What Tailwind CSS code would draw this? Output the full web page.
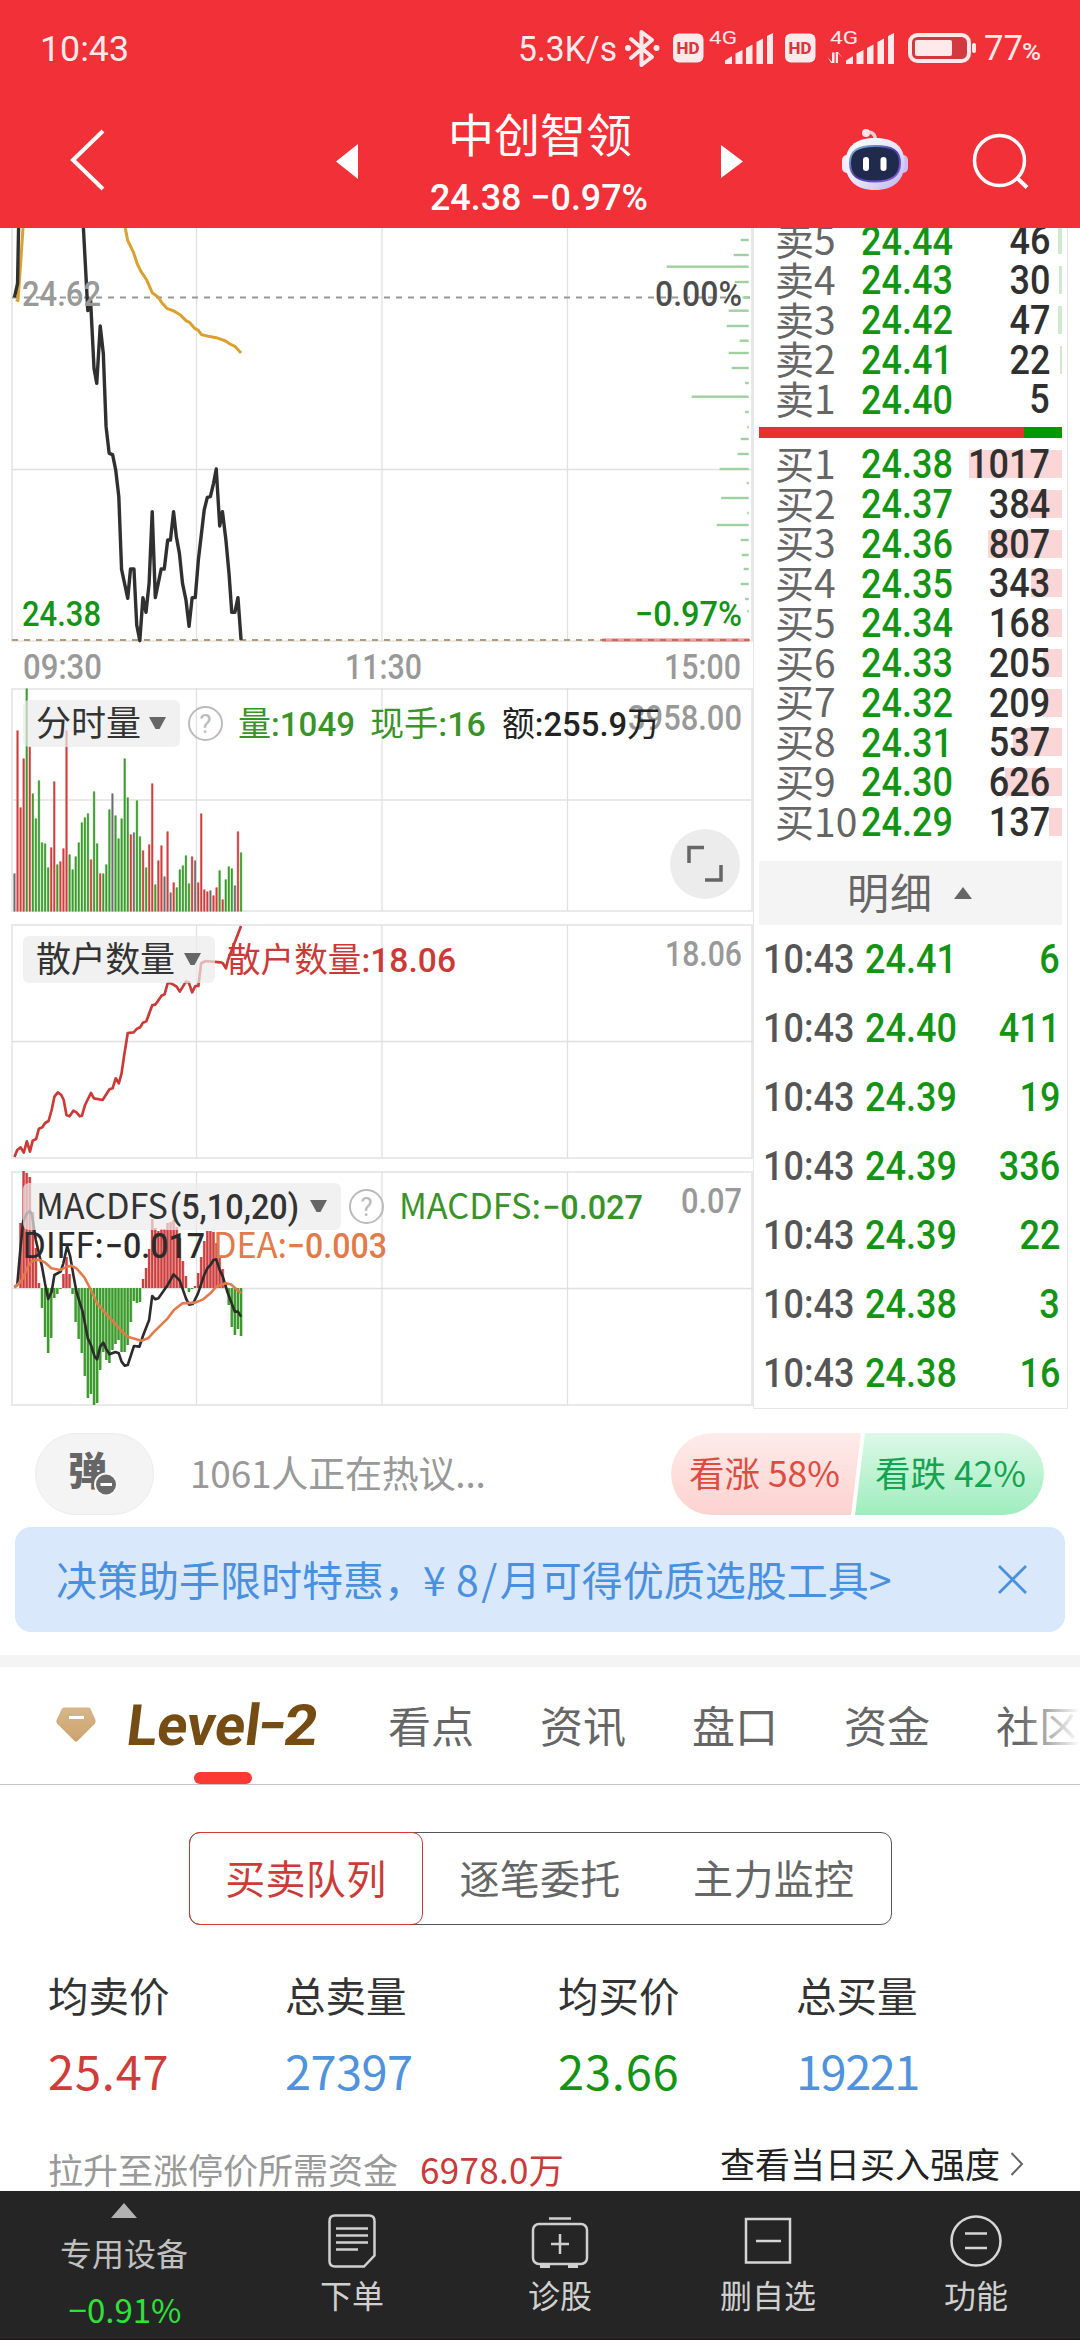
<!DOCTYPE html>
<html lang="zh-CN">
<head>
<meta charset="utf-8">
<title>中创智领</title>
<script src="https://cdn.jsdelivr.net/npm/@tailwindcss/browser@4"></script>
</head>
<body class="bg-white">
<div class="w-[1080px] h-[2340px] flex flex-col overflow-hidden bg-white font-['Noto_Sans_CJK_SC',sans-serif] text-[#333]">

  <!-- Status bar and title -->
  <header class="h-[228px] shrink-0 bg-[#f13038]">
    <svg width="1080" height="228" viewBox="0 0 1080 228" class="block font-['Roboto','Noto_Sans_CJK_SC',sans-serif]">
      <g fill="#ffe9ea">
        <text x="40" y="61" font-size="35" textLength="89" lengthAdjust="spacingAndGlyphs">10:43</text>
        <text x="518" y="61" font-size="35" textLength="99" lengthAdjust="spacingAndGlyphs">5.3K/s</text>
        <path d="M631 39 L652 57 L641.500 65 V32 L652 40 L631 58" fill="none" stroke="#ffe9ea" stroke-width="4" stroke-linejoin="round" stroke-linecap="round"/>
        <circle cx="628" cy="48" r="3"/><circle cx="656.500" cy="48" r="3"/>
        <rect x="673" y="33.500" width="30.500" height="29" rx="6"/>
        <rect x="785" y="33.500" width="30.500" height="29" rx="6"/>
        <g fill="#d8373d" font-size="17" font-weight="800" text-anchor="middle">
          <text x="688" y="54" textLength="23" lengthAdjust="spacingAndGlyphs">HD</text>
          <text x="800" y="54" textLength="23" lengthAdjust="spacingAndGlyphs">HD</text>
        </g>
        <text x="709" y="43.500" font-size="19" textLength="28" lengthAdjust="spacingAndGlyphs">4G</text>
        <text x="830" y="43.500" font-size="19" textLength="28" lengthAdjust="spacingAndGlyphs">4G</text>
        <path id="sig" d="M725 64V60.500L732 56V64ZM735.500 64V53.500L742.500 50V64ZM746 64V48L752.500 44.500V64ZM756.500 64V42L763 38.500V64ZM767 64V36L773 33V64Z"/>
        <use href="#sig" x="121"/>
        <path d="M827.500 57L832 62V52.500H834.500V63H831ZM843 58.500L838 53V63H835.800V52H838Z"/>
        <rect x="910" y="35" width="59" height="26" rx="7.500" fill="#d33a40" stroke="#ffe9ea" stroke-width="4"/>
        <rect x="915" y="40" width="37" height="16" rx="2"/>
        <rect x="972" y="43" width="4" height="10" rx="2"/>
        <text x="984" y="60" font-size="35" textLength="39" lengthAdjust="spacingAndGlyphs">77</text>
        <text x="1022" y="60" font-size="23" font-weight="500" textLength="19" lengthAdjust="spacingAndGlyphs">%</text>
      </g>
      <path d="M103 131L73 160L103 189" fill="none" stroke="#fff" stroke-width="4"/>
      <path d="M336 161.500L358 144V179ZM743 161.500L721 145V178Z" fill="#fff"/>
      <text x="448" y="152" font-size="46" fill="#fff" textLength="184" class="font-['Noto_Sans_CJK_SC']">中创智领</text>
      <text x="430" y="210" font-size="37" font-weight="500" fill="#fff" textLength="218" lengthAdjust="spacingAndGlyphs">24.38 −0.97%</text>
      <defs>
        <linearGradient id="helm" x1="0" y1="0" x2="1" y2="1"><stop offset="0" stop-color="#fff"/><stop offset=".55" stop-color="#e6e2fb"/><stop offset="1" stop-color="#b9b2ee"/></linearGradient>
        <linearGradient id="visor" x1="0" y1="0" x2="1" y2="1"><stop offset="0" stop-color="#7fc4e6"/><stop offset=".5" stop-color="#4b3fa8"/><stop offset="1" stop-color="#8a5be0"/></linearGradient>
      </defs>
      <path d="M865 133Q874 130 875.500 139" fill="none" stroke="#f3c9d8" stroke-width="3.500"/>
      <circle cx="866" cy="133" r="4" fill="#fde3ea"/>
      <rect x="842" y="155" width="10" height="18" rx="5" fill="#f3e9fb"/><rect x="898" y="155" width="10" height="18" rx="5" fill="#c9bff3"/>
      <path d="M875 138C896 138 904.500 148 904.500 163C904.500 180 894 190 875 190C856 190 845.500 180 845.500 163C845.500 148 854 138 875 138Z" fill="url(#helm)"/>
      <path d="M875 146C893 146 900 151 900 163C900 176 892 181.500 875 181.500C858 181.500 850 176 850 163C850 151 857 146 875 146Z" fill="#202a4d" stroke="url(#visor)" stroke-width="2"/>
      <rect x="863" y="157" width="6" height="14" rx="3" fill="#fff"/><rect x="880.500" y="157" width="6" height="14" rx="3" fill="#fff"/>
      <circle cx="999.500" cy="160.500" r="25" fill="none" stroke="#fff" stroke-width="3.500"/>
      <path d="M1017 178L1027 187.500" stroke="#fff" stroke-width="4"/>
    </svg>
  </header>

  <!-- Charts and order book -->
  <main class="flex h-[1181px] shrink-0">
    <section class="w-[753px] flex flex-col font-['Roboto','Noto_Sans_CJK_SC',sans-serif] font-medium">
      <svg id="price" width="753" height="453" viewBox="0 228 753 453" class="block">
        <path d="M12 228V641H753M752 228V641" fill="none" stroke="#e9e9e9" stroke-width="2"/>
        <path d="M196.500 228V641M382 228V641M567.500 228V641M12 469.500H753" fill="none" stroke="#e0e0e0" stroke-width="1.300"/>
        <path d="M12 297.500H753" stroke="#999" stroke-width="1.800" stroke-dasharray="6 6"/>
        <path d="M12 640H753" stroke="#b39a78" stroke-width="1.800" stroke-dasharray="6 6"/>
        <g id="dist"></g>
        <g transform="translate(0 220) scale(.34437 .33333)" fill="none" stroke-linejoin="round">
          <path vector-effect="non-scaling-stroke" stroke="#dba130" stroke-width="3" d="M47 238L52 242L60 130L67 20M363 20L371 62L388 98L398 130L408 152L426 180L442 218L458 230L470 248L486 266L505 273L525 286L540 302L550 307L565 325L575 330L585 344L605 349L628 353L655 363L668 372L682 379L700 399"/>
          <path vector-effect="non-scaling-stroke" stroke="#303030" stroke-width="3.400" d="M42 232L51 190L54 20M242 20L255 272L263 240L273 445L281 490L291 318L300 400L308 620L317 700L327 704L336 750L345 830L353 1048L371 1135L379 1047L389 1047L397 1215L406 1262L415 1133L424 1177L433 1090L442 875L451 1133L468 1047L477 1047L487 960L495 960L504 875L512 950L521 1000L530 1090L540 1140L549 1219L558 1133L567 1133L576 1020L593 870L602 832L611 830L620 790L628 747L638 918L646 875L656 960L665 1060L673 1177L682 1177L691 1133L700 1260"/>
        </g>
        <g font-size="35">
          <text x="22" y="306" fill="#999" textLength="79" lengthAdjust="spacingAndGlyphs">24.62</text>
          <text x="655" y="306" fill="#4d4d4d" textLength="87" lengthAdjust="spacingAndGlyphs">0.00%</text>
          <text x="22" y="626" fill="#149414" textLength="79" lengthAdjust="spacingAndGlyphs">24.38</text>
          <text x="635" y="626" fill="#149414" textLength="107" lengthAdjust="spacingAndGlyphs">−0.97%</text>
          <g fill="#999">
            <text x="23" y="679" textLength="79" lengthAdjust="spacingAndGlyphs">09:30</text>
            <text x="345" y="679" textLength="77" lengthAdjust="spacingAndGlyphs">11:30</text>
            <text x="664" y="679" textLength="77" lengthAdjust="spacingAndGlyphs">15:00</text>
          </g>
        </g>
      </svg>

      <svg width="753" height="237" viewBox="0 681 753 237" class="block">
        <path d="M12 688V911H753M12 689H753M752 688V911M12 800H753" fill="none" stroke="#e9e9e9" stroke-width="2"/>
        <path d="M196.500 688V911M382 688V911M567.500 688V911" stroke="#e0e0e0" stroke-width="1.300"/>
        <g id="volume"></g>
        <rect x="23" y="700" width="157" height="47" rx="6" fill="#ebebeb" fill-opacity=".7"/>
        <text x="36" y="736" font-size="35" font-weight="400" fill="#333" textLength="105">分时量</text>
        <path d="M149 717H166L159.500 729H155.500Z" fill="#666"/>
        <circle cx="205.500" cy="723.500" r="16.500" fill="none" stroke="#bbb" stroke-width="2"/>
        <text x="205.500" y="733" font-size="26" font-weight="400" fill="#bbb" text-anchor="middle">?</text>
        <text x="628" y="729.500" font-size="35" fill="#999" textLength="114" lengthAdjust="spacingAndGlyphs">3958.00</text>
        <g font-size="34">
          <text x="238" y="736" fill="#3a932a" textLength="117" lengthAdjust="spacingAndGlyphs"><tspan font-weight="400">量</tspan>:1049</text>
          <text x="370" y="736" fill="#3a932a" textLength="116" lengthAdjust="spacingAndGlyphs"><tspan font-weight="400">现手</tspan>:16</text>
          <text x="502" y="736" fill="#222" textLength="158" lengthAdjust="spacingAndGlyphs"><tspan font-weight="400">额</tspan>:255.9<tspan font-weight="400">万</tspan></text>
        </g>
        <circle cx="705" cy="864" r="35" fill="#ececec"/>
        <path d="M689 863V847.500H704M705 880H721V865" fill="none" stroke="#666" stroke-width="3.500"/>
      </svg>

      <svg width="753" height="247" viewBox="0 918 753 247" class="block">
        <path d="M12 924V1158H753M12 925H753M752 924V1158" fill="none" stroke="#e9e9e9" stroke-width="2"/>
        <path d="M196.500 925V1158M382 925V1158M567.500 925V1158M12 1041.500H753" stroke="#e0e0e0" stroke-width="1.300"/>
        <path transform="translate(0 680) scale(.34437 .33333)" vector-effect="non-scaling-stroke" fill="none" stroke="#cb3a37" stroke-width="2.700" stroke-linejoin="round" d="M42 1431L50 1410L60 1402L69 1418L78 1384L87 1415L95 1382L105 1377L113 1346L123 1342L131 1329L141 1323L150 1290L158 1250L168 1237L178 1245L185 1260L193 1305L202 1309L213 1292L222 1297L232 1309L238 1307L247 1275L264 1239L273 1255L298 1260L318 1228L327 1225L336 1195L345 1210L353 1180L360 1130L371 1059L388 1057L398 1046L407 1042L415 1028L425 1024L442 976L452 973L469 947L478 943L487 909L497 910L513 920L522 935L540 905L548 907L558 937L567 918L576 918L584 850L597 843L640 847L647 850L656 865L662 840L700 738"/>
        <rect x="23" y="936" width="192" height="47" rx="6" fill="#ebebeb" fill-opacity=".7"/>
        <text x="36" y="972" font-size="35" font-weight="400" fill="#333" textLength="139">散户数量</text>
        <path d="M184 953H201L194.500 965H190.500Z" fill="#666"/>
        <text x="227" y="972" font-size="34" fill="#cb3a37" textLength="229" lengthAdjust="spacingAndGlyphs"><tspan font-weight="400">散户数量</tspan>:18.06</text>
        <text x="665" y="965.500" font-size="35" fill="#999" textLength="77" lengthAdjust="spacingAndGlyphs">18.06</text>
      </svg>

      <svg width="753" height="244" viewBox="0 1165 753 244" class="block">
        <path d="M12 1171V1405H753M12 1172H753M752 1171V1405" fill="none" stroke="#e9e9e9" stroke-width="2"/>
        <path d="M196.500 1172V1405M382 1172V1405M567.500 1172V1405M12 1288.500H753" stroke="#e0e0e0" stroke-width="1.300"/>
        <g id="macd"></g>
        <g transform="translate(0 1160) scale(.34437 .33333)" fill="none" stroke-linejoin="round">
          <path vector-effect="non-scaling-stroke" stroke="#2b2b2b" stroke-width="2.600" d="M42 382L50 375L58 280L67 185L78 160L87 153L93 165L104 240L122 320L131 372L140 417L150 395L158 345L176 335L184 310L195 258L204 290L213 345L222 395L240 455L255 535L264 555L275 590L282 598L291 560L300 548L309 568L318 583L335 576L345 580L353 605L362 617L371 615L389 558L405 560L415 528L433 480L442 408L451 418L460 415L487 375L504 343L513 352L522 362L540 415L549 434L560 432L575 400L593 345L602 325L611 315L620 300L628 298L638 330L647 350L660 395L682 455L691 455L700 470"/>
          <path vector-effect="non-scaling-stroke" stroke="#e27a4a" stroke-width="2.600" d="M42 382L55 370L65 358L82 318L95 302L113 299L130 307L149 325L175 330L190 322L207 317L222 325L245 352L264 390L282 430L315 470L353 513L371 530L410 542L430 535L445 518L487 475L505 450L530 430L567 428L590 418L611 400L628 380L655 370L670 373L700 400"/>
        </g>
        <rect x="23" y="1183" width="318" height="47" rx="6" fill="#ebebeb" fill-opacity=".7"/>
        <text x="36" y="1219" font-size="35" font-weight="400" fill="#333" textLength="132" lengthAdjust="spacingAndGlyphs" class="font-['Noto_Sans_CJK_SC']">MACDFS</text>
        <text x="170" y="1219" font-size="35" fill="#333" textLength="129" lengthAdjust="spacingAndGlyphs">(5,10,20)</text>
        <path d="M310 1200H327L320.500 1212H316.500Z" fill="#666"/>
        <circle cx="366.500" cy="1206.500" r="16.500" fill="none" stroke="#bbb" stroke-width="2"/>
        <text x="366.500" y="1216" font-size="26" font-weight="400" fill="#bbb" text-anchor="middle">?</text>
        <g fill="#3a932a" font-size="35">
          <text x="399" y="1219" font-weight="400" textLength="142" lengthAdjust="spacingAndGlyphs" class="font-['Noto_Sans_CJK_SC']">MACDFS:</text>
          <text x="542" y="1219" font-size="34" textLength="101" lengthAdjust="spacingAndGlyphs">−0.027</text>
        </g>
        <text x="681" y="1213" font-size="35" fill="#999" textLength="61" lengthAdjust="spacingAndGlyphs">0.07</text>
        <text x="22" y="1257.500" font-size="35" fill="#2b2b2b" font-weight="400" textLength="82" lengthAdjust="spacingAndGlyphs" class="font-['Noto_Sans_CJK_SC']">DIFF:</text>
        <text x="105" y="1257.500" font-size="35" fill="#2b2b2b" textLength="100" lengthAdjust="spacingAndGlyphs">−0.017</text>
        <text x="213" y="1257.500" font-size="35" fill="#e27a4a" font-weight="400" textLength="74" lengthAdjust="spacingAndGlyphs" class="font-['Noto_Sans_CJK_SC']">DEA:</text>
        <text x="287" y="1257.500" font-size="35" fill="#e27a4a" textLength="100" lengthAdjust="spacingAndGlyphs">−0.003</text>
      </svg>
    </section>

    <aside class="w-[315px] flex flex-col border-x border-b border-[#e6e6e6] pl-[5px] pr-[5px] overflow-hidden">
      <div id="asks" class="h-[199px] pb-[7px] flex flex-col justify-end overflow-hidden shrink-0"></div>
      <div class="h-[11px] flex shrink-0"><div class="w-[265px] bg-[#e53131]"></div><div class="grow bg-[#009a00]"></div></div>
      <div id="bids" class="h-[423px] pt-[7px] shrink-0"></div>
      <div class="h-[64px] shrink-0 bg-[#f4f4f4] flex items-center pl-[88px] text-[42px] text-[#666] leading-[60px] tracking-[1px]"><span class="-mt-1">明细</span>
        <svg width="18" height="12" viewBox="0 0 18 12" class="ml-[21px]"><path d="M0 12L9 0L18 12Z" fill="#666"/></svg>
      </div>
      <div id="ticks" class="shrink-0"></div>
    </aside>
  </main>

  <!-- Discussion -->
  <div class="h-[118px] pt-[24px] shrink-0 flex pl-[35px] pr-[35px]">
    <div class="w-[119px] h-[82px] shrink-0 rounded-full bg-[#f4f4f4] border border-[#ececec]">
      <svg width="117" height="80" viewBox="36 1434 117 80" class="block">
        <text x="68" y="1485" font-size="39" font-weight="900" fill="#666">弹</text>
        <circle cx="106" cy="1484.500" r="12" fill="#f8f8f8"/><circle cx="106" cy="1484.500" r="10" fill="#6a6a6a"/>
        <path d="M100.500 1484.500H112" stroke="#fff" stroke-width="3"/>
      </svg>
    </div>
    <div class="ml-[36px] text-[37px] leading-[78px] text-[#999] grow whitespace-nowrap tracking-[-0.2px]">1061人正在热议...</div>
    <svg width="374" height="82" viewBox="0 0 374 82" class="block shrink-0">
      <defs>
        <linearGradient id="up" x2="0" y2="1"><stop stop-color="#feeceb"/><stop offset="1" stop-color="#fdd2cf"/></linearGradient>
        <linearGradient id="down" x2="0" y2="1"><stop stop-color="#dcf9e8"/><stop offset="1" stop-color="#9fedbe"/></linearGradient>
      </defs>
      <path d="M41 0H190L180 82H41A41 41 0 0 1 41 0Z" fill="url(#up)"/>
      <path d="M194 0H332A41 41 0 0 1 332 82H184Z" fill="url(#down)"/>
      <text x="18" y="54" font-size="35" fill="#de4b41" textLength="151" lengthAdjust="spacingAndGlyphs">看涨 58%</text>
      <text x="204" y="54" font-size="35" fill="#16a34f" textLength="151" lengthAdjust="spacingAndGlyphs">看跌 42%</text>
    </svg>
  </div>

  <div class="h-[105px] mx-[15px] shrink-0 rounded-[16px] bg-[#d9e8fb] text-[#4a90e0] flex items-center justify-between pl-[41px] pr-[38px] text-[41px] leading-[60px]">
    <span class="whitespace-nowrap -mt-1">决策助手限时特惠，<span class="inline-block w-[33px] -ml-[2px]">¥</span><span class="tracking-[2.5px]">8/</span>月可得优质选股工具&gt;</span>
    <svg width="29" height="29" viewBox="0 0 29 29"><path d="M1 1L28 28M28 1L1 28" stroke="#4a90e0" stroke-width="2.800"/></svg>
  </div>
  <div class="mt-[23px] h-[12px] shrink-0 bg-[#f4f4f4]"></div>

  <!-- Tabs -->
  <nav class="relative h-[118px] shrink-0 border-b border-[#c6c6c6] flex items-center text-[43px] text-[#666] leading-[60px] overflow-hidden whitespace-nowrap">
    <svg width="300" height="118" viewBox="50 1667 300 118" class="block ml-[50px] shrink-0">
      <defs><linearGradient id="gem" x2="0" y2="1"><stop stop-color="#d8b68a"/><stop offset="1" stop-color="#cba36d"/></linearGradient></defs>
      <path d="M62 1708.500Q63 1707.500 64.500 1707.500H88Q89.500 1707.500 90.500 1708.500L95.500 1720Q96 1722 95 1723.500L77.500 1741Q76 1742.500 74.500 1741L57 1723.500Q56 1722 56.500 1720Z" fill="url(#gem)"/>
      <rect x="69" y="1716" width="15" height="3" fill="#fff"/>
      <g transform="translate(125 1744.500) skewX(-7)" font-size="57" font-weight="700" fill="#754c13" class="font-['Roboto']">
        <text x="0" y="0" textLength="133" lengthAdjust="spacingAndGlyphs">Level</text>
        <text x="131" y="0" textLength="28" lengthAdjust="spacingAndGlyphs">−</text>
        <text x="157" y="0" textLength="34" lengthAdjust="spacingAndGlyphs">2</text>
      </g>
      <rect x="194" y="1772" width="58" height="12" rx="6" fill="#fa3a33"/>
    </svg>
    <div class="flex gap-[66px] ml-[38px] -mt-[4px]">
      <span>看点</span><span>资讯</span><span>盘口</span><span>资金</span><span>社区</span>
    </div>
    <div class="absolute right-0 top-0 h-[110px] w-[60px] bg-linear-to-r from-white/0 to-white"></div>
  </nav>

  <!-- Level-2 content -->
  <section class="h-[406px] shrink-0 overflow-hidden">
    <div class="mt-[47px] mx-auto w-[703px] h-[93px] rounded-[11px] border border-[#555] flex text-[40px] leading-[88px] text-[#666] text-center tracking-[0.3px]">
      <div class="-m-px w-[235px] rounded-[11px] border border-[#cd3b38] text-[#cd3b38]">买卖队列</div>
      <div class="w-[234px] ml-px">逐笔委托</div>
      <div class="w-[234px]">主力监控</div>
    </div>
    <div class="mt-[40px] flex pl-[48px] text-[40.500px] leading-[60px] text-[#333]">
      <div class="w-[237px]">均卖价<div class="mt-[15px] text-[47px] text-[#d03c3a] tracking-[0.8px]">25.47</div></div>
      <div class="w-[273px]">总卖量<div class="mt-[15px] text-[47px] text-[#5092dc] tracking-[-0.6px]">27397</div></div>
      <div class="w-[238px]">均买价<div class="mt-[15px] text-[47px] text-[#149414] tracking-[0.8px]">23.66</div></div>
      <div>总买量<div class="mt-[15px] text-[47px] text-[#5092dc] tracking-[-1.500px]">19221</div></div>
    </div>
    <div class="mt-[41px] flex pl-[48px] text-[35px] leading-[50px] whitespace-nowrap">
      <span class="text-[#999] mt-[3px]">拉升至涨停价所需资金</span>
      <span class="text-[#c93a38] ml-[22px] mt-[3px] tracking-[0.3px]">6978.0万</span>
      <span class="text-[#222] ml-auto -mt-[3px]">查看当日买入强度</span>
      <svg width="14" height="24" viewBox="0 0 14 24" class="ml-[10px] mr-[56px] mt-[11px]"><path d="M1.500 1L12 12L1.500 23" fill="none" stroke="#666" stroke-width="2"/></svg>
    </div>
  </section>

  <!-- Bottom navigation -->
  <footer class="h-[149px] shrink-0 bg-[#252525] border-b border-[#1b1418] text-[#d0d0d0] text-[32px] leading-[44px] flex">
    <div class="w-[248px] flex flex-col items-center pt-[12px] text-[#c0c0c0]">
      <svg width="26" height="15" viewBox="0 0 26 15"><path d="M0 15L13 0L26 15Z" fill="#b2b2b2"/></svg>
      <span class="mt-[12px]">专用设备</span>
      <span class="mt-[13px] ml-[2px] text-[33px] text-[#2ee23a]">−0.91%</span>
    </div>
    <div class="w-[208px] flex flex-col items-center pt-[20px]">
      <svg width="60" height="60" viewBox="322 2211 60 60" fill="none" stroke="#d0d0d0" stroke-width="2.500"><path d="M335 2215.500H369Q374.500 2215.500 374.500 2221V2255.500L364 2266.500H335Q329.500 2266.500 329.500 2261V2221Q329.500 2215.500 335 2215.500ZM336 2228.500H368M336 2235.500H368M336 2242.500H368M336 2249.500H358"/></svg>
      <span class="mt-[1px]">下单</span>
    </div>
    <div class="w-[208px] flex flex-col items-center pt-[20px]">
      <svg width="60" height="60" viewBox="530 2211 60 60" fill="none" stroke="#d0d0d0" stroke-width="2.500"><rect x="533" y="2224" width="54" height="40" rx="6"/><path d="M549 2218.500H571M560 2234V2254M551 2244H569"/><path d="M540 2266H550M568 2266H578" stroke-width="4"/></svg>
      <span class="mt-[1px]">诊股</span>
    </div>
    <div class="w-[208px] flex flex-col items-center pt-[20px]">
      <svg width="60" height="60" viewBox="738 2211 60 60" fill="none" stroke="#d6d6d6" stroke-width="2.500"><path d="M746 2219H790V2262.500H746ZM756 2241H781"/></svg>
      <span class="mt-[1px]">删自选</span>
    </div>
    <div class="w-[208px] flex flex-col items-center pt-[20px]">
      <svg width="60" height="60" viewBox="946 2211 60 60" fill="none" stroke="#d6d6d6" stroke-width="2.500"><circle cx="976" cy="2241" r="24.500"/><path d="M965 2233.500H987M965 2248H987"/></svg>
      <span class="mt-[1px]">功能</span>
    </div>
  </footer>
</div>

<script>
const rgb = { r: '#c9403f', g: '#3f972f', k: '#6c6c6c' };
const light = { r: '#f2a3a3', g: '#9bd795', k: '#c4c4c4' };
const X = i => (42 + 8.892 * i) / 2.904;

// Minute volume: colour key and bar height in pixels
const vol = 'k38 r181 r104 r153 g223 r165 g118 g93 g131 g69 g68 g44 r64 r130 g47 r50 r63 r181 g57 g42 g55 g69 g89 g94 g98 r52 g120 g68 r38 g38 g47 g102 k118 g96 g73 g93 g153 g114 r77 k79 g111 g75 r61 g44 r67 r128 g27 r51 r66 k35 r80 k19 r29 g24 g42 g46 g56 g28 r55 k51 r29 r98 r22 r20 k21 r16 r24 g41 r12 g32 g45 g43 k26 r80 g59'.split(' ');
document.getElementById('volume').innerHTML = vol.map((s, i) => {
  const c = s[0], h = +s.slice(1), x = X(i), y = 911.5 - h;
  return `<rect x="${x - 1.3}" y="${y}" width="2.6" height="${h}" fill="${light[c]}"/><rect x="${x - .8}" y="${y}" width="1.6" height="${h}" fill="${rgb[c]}"/>`;
}).join('');

// MACD histogram, signed pixel heights from the zero line
const macd = [0,0,65,117,115,111,76,40,5,-20,-49,-65,-50,-10,-6,-1,14,31,14,-6,-34,-51,-65,-88,-110,-106,-117,-115,-82,-64,-72,-75,-62,-56,-52,-64,-64,-57,-34,-13,-15,-14,9,20,39,69,60,57,59,59,65,66,68,61,50,27,12,-4,-1,2,15,31,47,57,57,56,45,31,19,6,-17,-39,-47,-41,-48];
document.getElementById('macd').innerHTML = macd.map((v, i) => {
  const c = v > 0 ? 'r' : 'g', h = Math.abs(v), y = v > 0 ? 1288 - h : 1288;
  return `<rect x="${X(i) - 1.5}" y="${y}" width="3.06" height="${h}" fill="${light[c]}"/><rect x="${X(i) - 1.1}" y="${y}" width="2.1" height="${h}" fill="${rgb[c]}"/>`;
}).join('');

// Price distribution at the right edge: [y, length]
const dist = [[240,8],[255,15],[266.7,82],[282,14],[297.5,6],[310.7,20],[326,22],[340.7,9],[353,20],[368,17],[383,3.5],[396.7,57],[412,3.5],[427,1.5],[439,8],[454,11],[469,29],[483,2],[498,27.5],[513,1.5],[525,32],[540,8],[555,7],[569,5],[584,8],[599,3.5],[611,1.5]];
document.getElementById('dist').innerHTML = dist.map(([y, w]) => `<rect x="${748.7 - w}" y="${y - 1.2}" width="${w}" height="2.4" fill="#9fd09f"/>`).join('') + '<rect x="602" y="638.300" width="147" height="3.400" fill="#e53131" fill-opacity=".45"/>';

const num = "font-['Roboto'] font-medium text-[40px] scale-x-[.9]";
const book = (name, price, v, buy) => `
  <div class="relative h-[39.75px] shrink-0 flex items-center leading-[39px] whitespace-nowrap">
    <div class="absolute right-0 top-[5px] h-[28px] ${buy ? 'bg-[#fad6d6]' : 'bg-[#cdeacd]'}" style="width:${v < 10 ? 0 : Math.max(2, v * .0914)}px"></div>
    <span class="relative ml-[16px] w-[86px] shrink-0 -mt-[5px] text-[39px] text-[#666]">${name}</span>
    <span class="relative origin-left shrink-0 ${num} text-[#149414]">${price}</span>
    <span class="absolute top-0 right-[12px] origin-right ${num} text-[#303030]">${v}</span>
  </div>`;
document.getElementById('asks').innerHTML = [['卖5','24.44',46],['卖4','24.43',30],['卖3','24.42',47],['卖2','24.41',22],['卖1','24.40',5]].map(r => book(...r, false)).join('');
document.getElementById('bids').innerHTML = [1017,384,807,343,168,205,209,537,626,137].map((v, i) => book('买' + (i + 1), (24.38 - i * .01).toFixed(2), v, true)).join('');
document.getElementById('ticks').innerHTML = [['24.41',6],['24.40',411],['24.39',19],['24.39',336],['24.39',22],['24.38',3],['24.38',16]].map(([p, v]) => `
  <div class="h-[69px] flex items-center leading-[60px]">
    <span class="ml-[4px] w-[102px] origin-left ${num} text-[#555]">10:43</span>
    <span class="origin-left ${num} text-[#149414]">${p}</span>
    <span class="ml-auto mr-[2px] origin-right ${num} text-[#149414]">${v}</span>
  </div>`).join('');
</script>
</body>
</html>
